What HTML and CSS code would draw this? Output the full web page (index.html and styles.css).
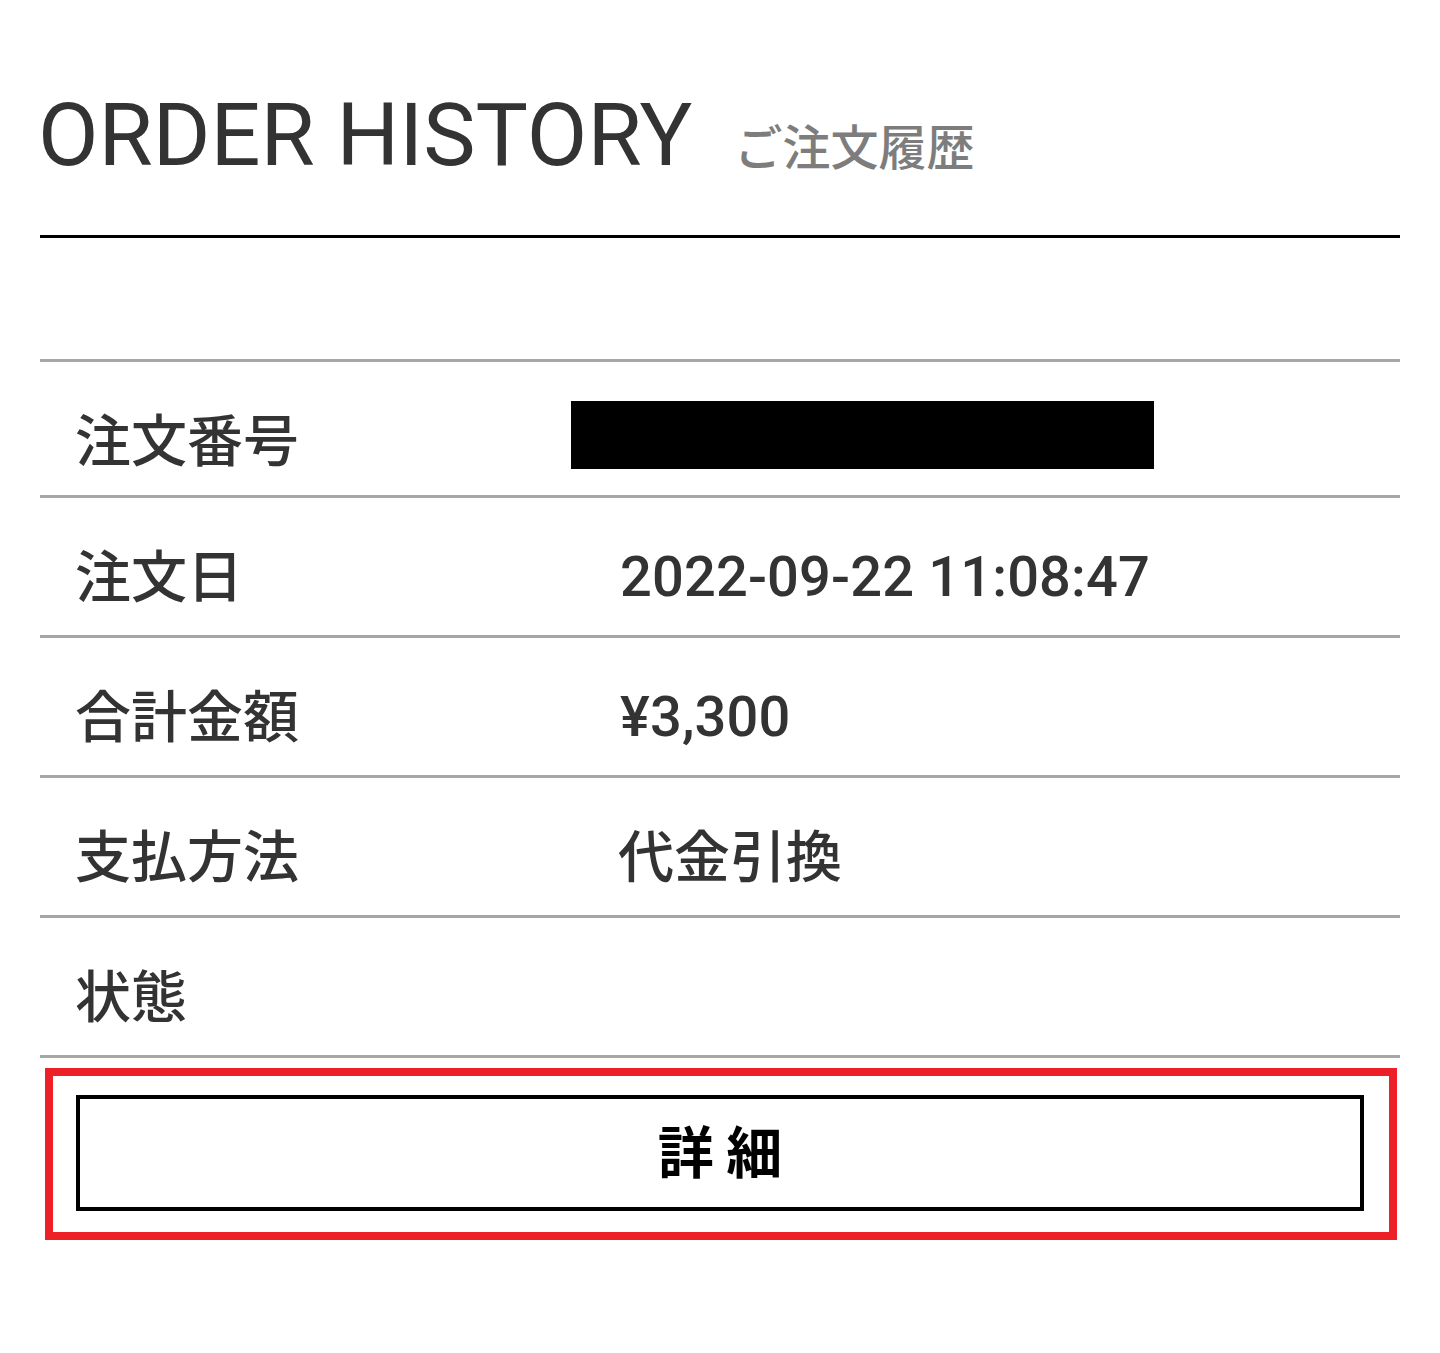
FILE: index.html
```html
<!DOCTYPE html>
<html lang="ja">
<head>
<meta charset="utf-8">
<title>ORDER HISTORY ご注文履歴</title>
<link rel="stylesheet" href="styles.css">
</head>
<body>
<main class="page">
  <header class="head">
    <h1 class="title">ORDER HISTORY</h1>
    <span class="subtitle">ご注文履歴</span>
  </header>
  <section class="orders">
    <div class="row row-first">
      <div class="label">注文番号</div>
      <div class="value"><span class="redact"></span></div>
    </div>
    <div class="row">
      <div class="label">注文日</div>
      <div class="value num">2022-09-22 11:08:47</div>
    </div>
    <div class="row">
      <div class="label">合計金額</div>
      <div class="value num">¥3,300</div>
    </div>
    <div class="row">
      <div class="label">支払方法</div>
      <div class="value">代金引換</div>
    </div>
    <div class="row">
      <div class="label">状態</div>
      <div class="value"></div>
    </div>
    <div class="highlight">
      <button class="detail" type="button">詳 細</button>
    </div>
  </section>
</main>
</body>
</html>
```

FILE: styles.css
```css
* { box-sizing: border-box; }
html, body { margin: 0; padding: 0; background: #fff; }
body {
  font-family: "Noto Sans CJK JP", "Noto Sans", sans-serif;
  color: #333;
}
.page {
  width: 1440px;
  padding: 0 40px;
}
.head {
  display: flex;
  align-items: baseline;
  padding-top: 91px;
  padding-bottom: 56px;
  border-bottom: 3px solid #000;
}
.title {
  margin: 0 0 0 -2px;
  font-family: Roboto, "Liberation Sans", sans-serif;
  font-weight: 400;
  font-size: 88px;
  line-height: 88px;
  color: #333;
}
.subtitle {
  margin-left: 42px;
  font-size: 48px;
  line-height: 48px;
  font-weight: 500;
  color: #7d7d7d;
}
.orders {
  margin-top: 121px;
  border-top: 3px solid #a6a6a6;
}
.row {
  display: flex;
  align-items: flex-start;
  height: 140px;
  padding-top: 47px;
  border-bottom: 3px solid #a6a6a6;
}
.row-first { height: 136px; }
.label {
  width: 578px;
  padding-left: 35px;
  font-size: 56px;
  line-height: 56px;
  font-weight: 500;
  color: #333;
}
.value {
  font-size: 56px;
  line-height: 56px;
  font-weight: 500;
  color: #333;
}
.num {
  font-family: Roboto, "Liberation Sans", sans-serif;
  font-weight: 500;
  letter-spacing: 0.15px;
  padding-top: 4px;
  padding-left: 2px;
}
.redact {
  display: block;
  width: 583px;
  height: 68px;
  margin-left: -47px;
  margin-top: -8px;
  background: #000;
}
.highlight {
  margin: 10px 3px 0 5px;
  border: 8px solid #ed1f27;
  padding: 19px 25px 21px 23px;
}
.detail {
  display: flex;
  align-items: center;
  justify-content: center;
  width: 100%;
  height: 116px;
  margin: 0;
  padding: 0 0 8px 0;
  background: #fff;
  border: 4px solid #000;
  font-family: "Noto Sans CJK JP", sans-serif;
  font-size: 56px;
  font-weight: 700;
  color: #000;
  line-height: 56px;
}
```
